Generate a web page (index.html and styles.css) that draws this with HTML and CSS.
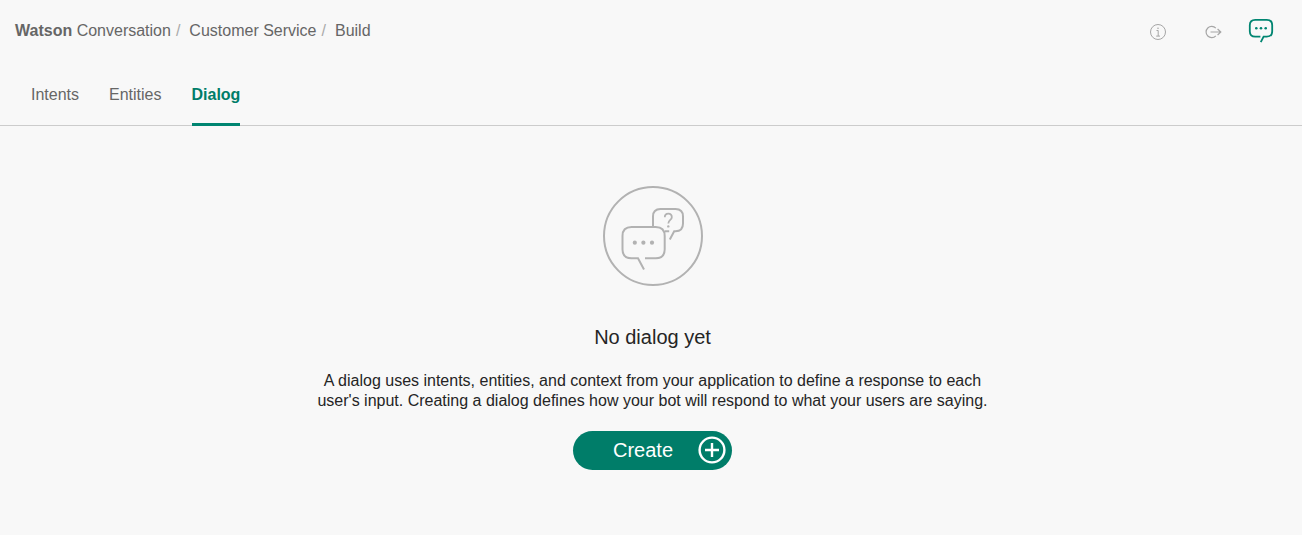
FILE: index.html
```html
<!DOCTYPE html>
<html lang="en">
<head>
<meta charset="utf-8">
<title>Watson Conversation</title>
<link rel="stylesheet" href="styles.css">
</head>
<body>
<header class="topbar">
  <nav class="crumbs" aria-label="Breadcrumb">
    <a class="brand" href="#"><b>Watson</b> Conversation</a>
    <span class="slash">/</span>
    <a href="#">Customer Service</a>
    <span class="slash">/</span>
    <a href="#">Build</a>
  </nav>
  <div class="actions">
    <button class="icon-button" type="button" aria-label="Information">
      <svg width="18" height="18" viewBox="0 0 18 18" fill="none" stroke="#a6a6a6">
        <circle cx="9" cy="10" r="7.5"/>
        <path d="M7.5 8.5H9.2V14M7.2 14.1H11" />
        <circle cx="9" cy="6.2" r=".8" fill="#a6a6a6" stroke="none"/>
      </svg>
    </button>
    <button class="icon-button" type="button" aria-label="Log out">
      <svg width="18" height="18" viewBox="0 0 18 18" fill="none" stroke="#a6a6a6" stroke-width="1.2">
        <path d="M11.8 6.2A5.6 5.6 0 1 0 11.8 13.8M6.5 10H16.5M13.6 7L16.8 10L13.6 13"/>
      </svg>
    </button>
    <button class="icon-button" type="button" aria-label="Open chat">
      <svg width="26" height="26" viewBox="0 0 26 26" fill="none" stroke="#008571" stroke-width="1.8">
        <path d="M12.4 18.6H7.2Q1.8 18.6 1.8 13.2V7.2Q1.8 1.8 7.2 1.8H18.8Q24.2 1.8 24.2 7.2V13.2Q24.2 18.6 18.8 18.6H15.6L12.8 24.2"/>
        <g fill="#008571" stroke="none"><circle cx="8.3" cy="10.3" r="1.3"/><circle cx="13" cy="10.3" r="1.3"/><circle cx="17.7" cy="10.3" r="1.3"/></g>
      </svg>
    </button>
  </div>
</header>
<nav class="tabs" aria-label="Workspace">
  <a class="tab" href="#">Intents</a>
  <a class="tab" href="#">Entities</a>
  <a class="tab active" href="#" aria-current="page">Dialog</a>
</nav>
<main class="empty">
  <svg width="100" height="100" viewBox="0 0 100 100" fill="none" stroke="#b2b2b2" stroke-width="2" aria-hidden="true">
    <circle cx="50" cy="50" r="49"/>
    <path d="M42 72.3H52.7Q61.7 72.3 61.7 63.3V50Q61.7 41 52.7 41H28.5Q19.5 41 19.5 50V63.3Q19.5 72.3 28.5 72.3H35L41 83.5"/>
    <path d="M50 41V30.5Q50 23 57.5 23H72.5Q80 23 80 30.5V37.5Q80 45.2 72.5 45.2H71.2L66.8 53.5M61.7 45.2H66.2"/>
    <path d="M61.8 31.2C61.8 26.4 68.8 26.4 68.8 31.2C68.8 34 65.3 33.8 65.3 37.6" stroke-width="1.8"/>
    <g fill="#b2b2b2" stroke="none"><circle cx="65.3" cy="40.4" r="1.2"/><circle cx="31.8" cy="56.7" r="2.1"/><circle cx="40.4" cy="56.7" r="2.1"/><circle cx="49" cy="56.7" r="2.1"/></g>
  </svg>
  <h1 class="title">No dialog yet</h1>
  <p class="description">A dialog uses intents, entities, and context from your application to define a response to each user's input. Creating a dialog defines how your bot will respond to what your users are saying.</p>
  <button class="create" type="button">
    <span class="create-label">Create</span>
    <svg width="28" height="28" viewBox="0 0 28 28" fill="none" stroke="#fff" stroke-width="2.4" aria-hidden="true">
      <circle cx="14" cy="14" r="12.4"/><path d="M14 7V21M7 14H21"/>
    </svg>
  </button>
</main>
</body>
</html>
```
FILE: styles.css
```css
* { box-sizing: border-box; }
body {
  margin: 0;
  background: #f8f8f8;
  color: #252525;
  font: 16px/20px "Liberation Sans", Arial, sans-serif;
}
a { color: #666; text-decoration: none; }
button { margin: 0; padding: 0; border: 0; background: none; font: inherit; cursor: pointer; }
svg { display: block; }
.topbar {
  display: flex;
  align-items: center;
  justify-content: space-between;
  height: 62px;
  padding: 0 28px 0 15px;
}
.crumbs { display: flex; }
.slash { margin: 0 9px 0 5px; color: #aaa; }
.actions { display: flex; align-items: center; gap: 37px; }
.icon-button:last-child { margin-left: -11px; }
.tabs {
  display: flex;
  gap: 30px;
  height: 64px;
  padding: 0 31px;
  border-bottom: 1px solid #ccc;
}
.tab {
  height: 64px;
  padding-top: 23px;
  border-bottom: 3px solid transparent;
}
.active { border-bottom-color: #008571; color: #007d69; font-weight: 700; }
.empty {
  display: flex;
  flex-direction: column;
  align-items: center;
  padding: 60px 16px 24px 19px;
}
.title { margin: 39px 0 0; font-size: 20px; line-height: 24px; font-weight: 400; }
.description { max-width: 680px; margin: 22px 0 0; text-align: center; }
.create {
  display: flex;
  align-items: center;
  justify-content: space-between;
  min-width: 159px;
  margin-top: 20px;
  padding: 5px 6px 6px 40px;
  border-radius: 20px;
  background: #007d69;
  color: #fff;
}
.create-label { font-size: 20px; line-height: 24px; }
```
